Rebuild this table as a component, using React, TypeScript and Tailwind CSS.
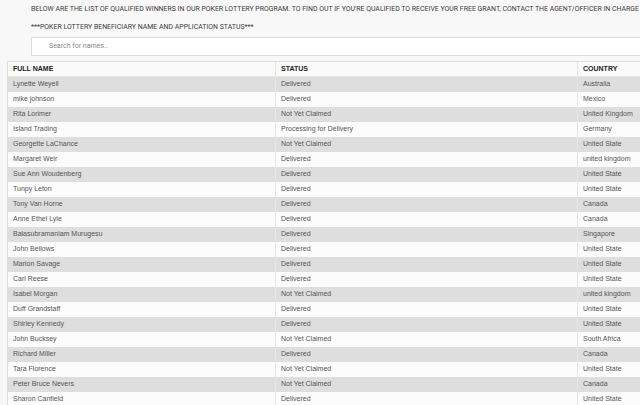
import React from 'react';

interface Winner {
  name: string;
  status: string;
  country: string;
}

const winners: Winner[] = [
  { name: 'Lynette Weyell', status: 'Delivered', country: 'Australia' },
  { name: 'mike johnson', status: 'Delivered', country: 'Mexico' },
  { name: 'Rita Lorimer', status: 'Not Yet Claimed', country: 'United Kingdom' },
  { name: 'Island Trading', status: 'Processing for Delivery', country: 'Germany' },
  { name: 'Georgette LaChance', status: 'Not Yet Claimed', country: 'United State' },
  { name: 'Margaret Weir', status: 'Delivered', country: 'united kingdom' },
  { name: 'Sue Ann Woudenberg', status: 'Delivered', country: 'United State' },
  { name: 'Tunpy Leton', status: 'Delivered', country: 'United State' },
  { name: 'Tony Van Horne', status: 'Delivered', country: 'Canada' },
  { name: 'Anne Ethel Lyle', status: 'Delivered', country: 'Canada' },
  { name: 'Balasubramaniam Murugesu', status: 'Delivered', country: 'Singapore' },
  { name: 'John Bellows', status: 'Delivered', country: 'United State' },
  { name: 'Marion Savage', status: 'Delivered', country: 'United State' },
  { name: 'Carl Reese', status: 'Delivered', country: 'United State' },
  { name: 'Isabel Morgan', status: 'Not Yet Claimed', country: 'united kingdom' },
  { name: 'Duff Grandstaff', status: 'Delivered', country: 'United State' },
  { name: 'Shirley Kennedy', status: 'Delivered', country: 'United State' },
  { name: 'John Bucksey', status: 'Not Yet Claimed', country: 'South Africa' },
  { name: 'Richard Miller', status: 'Delivered', country: 'Canada' },
  { name: 'Tara Florence', status: 'Not Yet Claimed', country: 'United State' },
  { name: 'Peter Bruce Nevers', status: 'Not Yet Claimed', country: 'Canada' },
  { name: 'Sharon Canfield', status: 'Delivered', country: 'United State' },
];

const App: React.FC = () => {
  return (
    <div className="w-[640px] h-[405px] overflow-hidden bg-[#f8f8f8] text-[#555] font-['Liberation_Sans',Arial,sans-serif]">
      <div className="pl-[31px] pt-[5px] font-['Roboto',sans-serif] text-[6.95px] text-[#3a3a3a] whitespace-nowrap">
        <p className="leading-[9px]">
          BELOW ARE THE LIST OF QUALIFIED WINNERS IN OUR POKER LOTTERY PROGRAM. TO FIND OUT IF YOU'RE QUALIFIED TO RECEIVE YOUR FREE GRANT, CONTACT THE AGENT/OFFICER IN CHARGE
        </p>
        <p className="leading-[9px] mt-[9px]">***POKER LOTTERY BENEFICIARY NAME AND APPLICATION STATUS***</p>
        <div className="mt-[5px] w-[640px] h-[19px] bg-white border border-[#dcdcdc] flex items-center pl-[17px]">
          <input
            placeholder="Search for names.."
            className="w-full bg-transparent outline-none text-[7px] placeholder:text-[#888] font-['Roboto',sans-serif]"
          />
        </div>
      </div>
      <div className="ml-[7px] mt-[5px] w-[700px] border-t border-l border-[#dedede]">
        <div className="flex h-[15px] items-center bg-[#fafafa] border-b border-[#e4e4e4] text-[7px] font-bold text-[#222]">
          <div className="w-[268px] pl-[5px] border-r border-[#e4e4e4] h-full flex items-center">FULL NAME</div>
          <div className="w-[302px] pl-[5px] border-r border-[#e4e4e4] h-full flex items-center">STATUS</div>
          <div className="flex-1 pl-[5px] h-full flex items-center">COUNTRY</div>
        </div>
        {winners.map((w, i) => (
          <div
            key={w.name}
            className={`flex h-[15px] items-center text-[7px] ${i % 2 === 0 ? 'bg-[#dedede]' : 'bg-[#fcfcfc]'}`}
          >
            <div className="w-[268px] pl-[5px] border-r border-[#e6e6e6] h-full flex items-center">{w.name}</div>
            <div className="w-[302px] pl-[5px] border-r border-[#e6e6e6] h-full flex items-center">{w.status}</div>
            <div className="flex-1 pl-[5px] h-full flex items-center">{w.country}</div>
          </div>
        ))}
      </div>
    </div>
  );
};

export default App;
